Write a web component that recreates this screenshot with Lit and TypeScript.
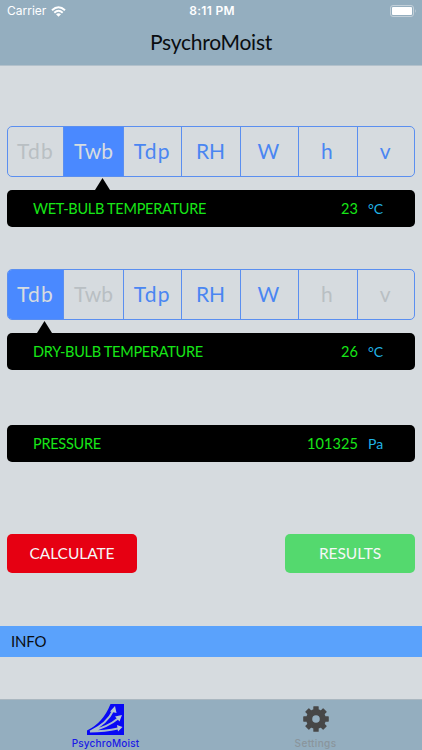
import { LitElement, html, css, svg } from "lit";
import { customElement, property } from "lit/decorators.js";
import { classMap } from "lit/directives/class-map.js";

const KEYS = ["Tdb", "Twb", "Tdp", "RH", "W", "h", "v"];

@customElement("unit-segments")
class UnitSegments extends LitElement {
  @property() selected = "";
  @property({ attribute: false }) disabled: string[] = [];

  static styles = css`
    :host {
      display: grid;
      grid-template-columns: 56px 60px 57.5px 59px 58px 59px 1fr;
      box-sizing: border-box;
      height: 51px;
      border: 1px solid #5b8ff0;
      border-radius: 5px;
      overflow: hidden;
      color: #4a86f2;
      font-size: 21px;
      letter-spacing: 1.2px;
    }
    .cell {
      display: flex;
      align-items: center;
      justify-content: center;
      padding-bottom: 2px;
      border-right: 1px solid #5b8ff0;
    }
    .cell:last-child {
      border-right: 0;
    }
    .cell:nth-child(2) {
      letter-spacing: 0;
    }
    .cell:nth-child(4) {
      letter-spacing: 0;
    }
    .off {
      color: #b9bfc3;
    }
    .on {
      background: #4a89ff;
      color: #d7dce0;
    }
  `;

  render() {
    return KEYS.map(
      (k) => html`<div class=${classMap({ cell: true, on: k === this.selected, off: this.disabled.includes(k) })}>${k}</div>`
    );
  }
}

@customElement("value-bar")
class ValueBar extends LitElement {
  @property() label = "";
  @property() value = "";
  @property() unit = "";

  static styles = css`
    :host {
      display: flex;
      align-items: center;
      box-sizing: border-box;
      height: 37px;
      padding: 0 10px 0 26px;
      background: #000;
      border-radius: 5px;
      color: #17e617;
      font-size: 14.5px;
    }
    .label {
      flex: 1;
      white-space: nowrap;
      letter-spacing: -0.28px;
    }
    .value {
      letter-spacing: 0.1px;
    }
    .unit {
      width: 37px;
      margin-left: 10px;
      color: #20b4e6;
      font-size: 14px;
    }
  `;

  render() {
    return html`<span class="label">${this.label}</span>
      <span class="value">${this.value}</span>
      <span class="unit">${this.unit}</span>`;
  }
}

@customElement("app-root")
class AppRoot extends LitElement {
  static styles = css`
    :host {
      display: flex;
      flex-direction: column;
      width: 422px;
      height: 750px;
      overflow: hidden;
      background: #d6dbdf;
      font-family: Lato, "Open Sans", sans-serif;
    }
    header {
      height: 65px;
      background: #94aebf;
      border-bottom: 1px solid #b3c1cb;
    }
    .status {
      display: grid;
      grid-template-columns: 1fr auto 1fr;
      align-items: center;
      height: 22px;
      padding: 0 5px 0 7px;
      color: #fff;
      font: 12px/22px Inter, sans-serif;
    }
    .carrier {
      display: flex;
      align-items: center;
      gap: 5px;
    }
    .time {
      font-weight: 600;
      letter-spacing: 0.3px;
    }
    .battery {
      justify-self: end;
    }
    svg {
      display: block;
    }
    h1 {
      margin: 0;
      text-align: center;
      font-size: 21px;
      line-height: 40px;
      font-weight: 400;
      letter-spacing: -0.25px;
      color: #0a0d10;
    }
    main {
      flex: 1;
      padding: 60px 7px 0;
    }
    .pointer {
      height: 12px;
      width: 15px;
      margin-top: 1px;
      background: #000;
      clip-path: polygon(50% 0, 100% 100%, 0 100%);
    }
    .second {
      margin-left: 88px;
    }
    .first {
      margin-left: 30px;
    }
    .group {
      margin-bottom: 42px;
    }
    .pressure {
      margin-top: 55px;
    }
    .actions {
      display: flex;
      justify-content: space-between;
      margin-top: 72px;
    }
    button {
      width: 130px;
      height: 39px;
      padding: 0 0 2px;
      border: 0;
      border-radius: 5px;
      color: #f5f7f7;
      font: 15.5px Lato, sans-serif;
      letter-spacing: -0.05px;
    }
    .calc {
      background: #e60012;
    }
    .res {
      background: #54d96e;
    }
    .info {
      height: 31px;
      margin: 53px -7px 0;
      padding-left: 11px;
      background: #5aa2fc;
      color: #0a0d10;
      font-size: 15px;
      line-height: 31px;
      letter-spacing: -0.2px;
    }
    nav {
      display: grid;
      grid-template-columns: 1fr 1fr;
      height: 50px;
      background: #94aebf;
      border-top: 1px solid #aab7c0;
      font: 500 10px/12px Inter, sans-serif;
    }
    .tab {
      display: flex;
      flex-direction: column;
      align-items: center;
      justify-content: space-between;
      padding: 4px 0 1px;
      letter-spacing: 0.2px;
    }
    .home {
      color: #1a1ae6;
    }
    .settings {
      padding-right: 2px;
      letter-spacing: 0.35px;
      color: #8a959c;
    }
  `;

  render() {
    return html`
      <header>
        <div class="status">
          <span class="carrier">
            <span>Carrier</span>
            <svg width="15" height="11" viewBox="0 0 15 11" fill="none" stroke="#fff" stroke-width="2">
              <path d="M1 4.2Q7.5-1.8 14 4.2M3.3 6.7Q7.5 2.9 11.7 6.7" />
              <path d="M5 8.3Q7.5 6.2 10 8.3L7.5 10.8z" fill="#fff" stroke="none" />
            </svg>
          </span>
          <span class="time">8:11 PM</span>
          <svg class="battery" width="27" height="12" viewBox="0 0 27 12">
            <rect x="0.5" y="0.5" width="23" height="11" rx="2.5" fill="none" stroke="#c3d0d9" />
            <rect x="2" y="2" width="20" height="8" rx="1" fill="#fff" />
            <path d="M25 4q1.6 2 0 4z" fill="#c3d0d9" />
          </svg>
        </div>
        <h1>PsychroMoist</h1>
      </header>
      <main>
        <div class="group">
          <unit-segments selected="Twb" .disabled=${["Tdb"]}></unit-segments>
          <div class="pointer second"></div>
          <value-bar label="WET-BULB TEMPERATURE" value="23" unit="°C"></value-bar>
        </div>
        <div class="group">
          <unit-segments selected="Tdb" .disabled=${["Twb", "h", "v"]}></unit-segments>
          <div class="pointer first"></div>
          <value-bar label="DRY-BULB TEMPERATURE" value="26" unit="°C"></value-bar>
        </div>
        <value-bar class="pressure" label="PRESSURE" value="101325" unit="Pa"></value-bar>
        <div class="actions">
          <button class="calc">CALCULATE</button>
          <button class="res">RESULTS</button>
        </div>
        <div class="info">INFO</div>
      </main>
      <nav>
        <div class="tab home">
          <svg width="37" height="31" viewBox="0 0 37 31">
            <path d="M0 31V26.500Q16 19 23.500 0H37V31Z" fill="#0808f5" />
            <g fill="none" stroke="#a9bccb" stroke-width="1.9">
              <path d="M3 27.500Q20 20 26.500 6M3 27.500Q21 23 31 14.500M3 27.500Q18 27.500 31 24.500" />
            </g>
            <g fill="#b5c5d2">
              <path d="M28 2L23 7.500L29.500 9zM35 11L28 12.500L32.500 17.500zM35.500 23L30 21L31 27.500z" />
            </g>
          </svg>
          <span>PsychroMoist</span>
        </div>
        <div class="tab settings">
          <svg width="26" height="31" viewBox="-13 -15 26 31">
            <g fill="#474747">
              ${[0, 45, 90, 135].map((a) => svg`<rect x="-2.7" y="-12.8" width="5.400" height="25.600" rx="0.600" transform="rotate(${a})" />`)}
              <circle r="9.900" />
            </g>
            <circle r="3.800" fill="#94aebf" />
          </svg>
          <span>Settings</span>
        </div>
      </nav>
    `;
  }
}
